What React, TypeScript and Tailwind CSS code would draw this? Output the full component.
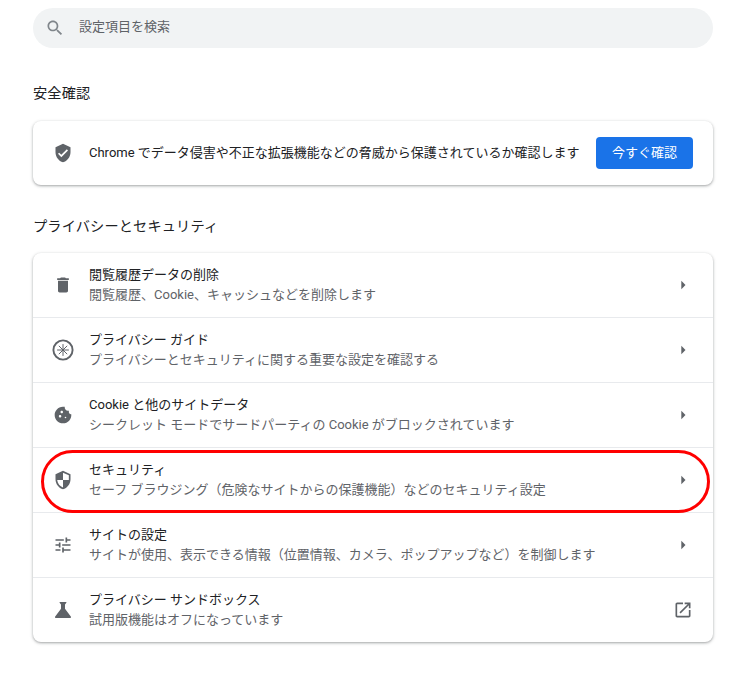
import React from 'react';

const FONT = "font-['Roboto','Noto_Sans_CJK_JP',sans-serif]";

const Icon: React.FC<{ d: string; className?: string }> = ({ d, className }) => (
  <svg viewBox="0 0 24 24" className={className ?? 'size-5 fill-[#5f6368]'}>
    <path d={d} />
  </svg>
);

const paths = {
  search:
    'M15.5 14h-.79l-.28-.27C15.41 12.59 16 11.11 16 9.5 16 5.91 13.09 3 9.5 3S3 5.91 3 9.5 5.91 16 9.5 16c1.61 0 3.09-.59 4.23-1.57l.27.28v.79l5 4.99L20.49 19l-4.99-5zm-6 0C7.01 14 5 11.99 5 9.5S7.01 5 9.5 5 14 7.01 14 9.5 11.99 14 9.5 14z',
  verified:
    'M12 1L3 5v6c0 5.55 3.84 10.74 9 12 5.16-1.26 9-6.45 9-12V5l-9-4zm-2 16l-4-4 1.41-1.41L10 14.17l6.59-6.59L18 9l-8 8z',
  trash: 'M6 19c0 1.1.9 2 2 2h8c1.1 0 2-.9 2-2V7H6v12zM19 4h-3.5l-1-1h-5l-1 1H5v2h14V4z',
  cookie:
    'M21.95 10.99c-1.79-.03-3.7-1.95-2.68-4.22-2.98 1-5.77-1.59-5.19-4.56C6.95.71 2 6.58 2 12c0 5.52 4.48 10 10 10 5.89 0 10.54-5.08 9.95-11.01zM8.5 15c-.83 0-1.5-.67-1.5-1.5S7.67 12 8.5 12s1.5.67 1.5 1.5S9.33 15 8.5 15zm2-5C9.67 10 9 9.33 9 8.5S9.67 7 10.5 7s1.5.67 1.5 1.5-.67 1.5-1.5 1.5zm4.5 6c-.55 0-1-.45-1-1s.45-1 1-1 1 .45 1 1-.45 1-1 1z',
  security:
    'M12 1L3 5v6c0 5.55 3.84 10.74 9 12 5.16-1.26 9-6.45 9-12V5l-9-4zm0 10.99h7c-.53 4.12-3.28 7.79-7 8.94V12H5V6.3l7-3.11v8.8z',
  tune: 'M3 17v2h6v-2H3zM3 5v2h10V5H3zm10 16v-2h8v-2h-8v-2h-2v6h2zM7 9v2H3v2h4v2h2V9H7zm14 4v-2H11v2h10zm-6-4h2V7h4V5h-4V3h-2v6z',
  flask:
    'M19.8 18.4L14 10.67V6.5l1.35-1.69c.26-.33.03-.81-.39-.81H9.04c-.42 0-.65.48-.39.81L10 6.5v4.17L4.2 18.4c-.49.66-.02 1.6.8 1.6h14c.82 0 1.29-.94.8-1.6z',
  external:
    'M19 19H5V5h7V3H5c-1.11 0-2 .9-2 2v14c0 1.1.89 2 2 2h14c1.1 0 2-.9 2-2v-7h-2v7zM14 3v2h3.59l-9.83 9.83 1.41 1.41L19 6.41V10h2V3h-7z',
  arrow: 'M10 7l5 5-5 5z',
};

const GuideIcon = () => (
  <svg viewBox="0 0 24 24" className="size-[24px] shrink-0">
    <circle cx="12" cy="12" r="9.6" fill="none" stroke="#5f6368" strokeWidth="1.9" />
    <path
      d="M12 6.5v11M6.5 12h11M8.1 8.1l7.8 7.8M15.9 8.1l-7.8 7.8"
      stroke="#5f6368"
      strokeWidth="1"
      strokeLinecap="round"
      fill="none"
    />
  </svg>
);

const rows = [
  { icon: <Icon d={paths.trash} />, title: '閲覧履歴データの削除', sub: '閲覧履歴、Cookie、キャッシュなどを削除します' },
  { icon: <GuideIcon />, title: 'プライバシー ガイド', sub: 'プライバシーとセキュリティに関する重要な設定を確認する' },
  { icon: <Icon d={paths.cookie} />, title: 'Cookie と他のサイトデータ', sub: 'シークレット モードでサードパーティの Cookie がブロックされています' },
  {
    icon: <Icon d={paths.security} className="size-5 -scale-x-100 fill-[#5f6368]" />,
    title: 'セキュリティ',
    sub: 'セーフ ブラウジング（危険なサイトからの保護機能）などのセキュリティ設定',
  },
  { icon: <Icon d={paths.tune} />, title: 'サイトの設定', sub: 'サイトが使用、表示できる情報（位置情報、カメラ、ポップアップなど）を制御します' },
  {
    icon: <Icon d={paths.flask} className="size-6 shrink-0 fill-[#5f6368]" />,
    title: 'プライバシー サンドボックス',
    sub: '試用版機能はオフになっています',
    external: true,
  },
];

export default function App() {
  return (
    <div className={`${FONT} relative h-[676px] w-[741px] overflow-hidden bg-white px-[33px] pt-2 text-[13px] text-[#202124]`}>
      <div className="flex h-10 w-[680px] items-center rounded-full bg-[#f1f3f4] pl-[12px] text-[#5f6368]">
        <Icon d={paths.search} className="size-[20px] fill-[#80868b]" />
        <span className="ml-[14px] -translate-y-px">設定項目を検索</span>
      </div>

      <h2 className="mt-[35px] h-[20px] text-[14.2px] leading-5 font-normal tracking-[0.15px]">安全確認</h2>
      <div className="mt-[18px] flex h-16 w-[680px] items-center rounded-lg bg-white pr-5 pl-5 shadow-[0_1px_2px_rgba(60,64,67,0.3),0_1px_3px_1px_rgba(60,64,67,0.15)]">
        <Icon d={paths.verified} />
        <span className="ml-4 flex-1">Chrome でデータ侵害や不正な拡張機能などの脅威から保護されているか確認します</span>
        <button className="h-8 w-[97px] rounded bg-[#1a73e8] text-[13px] text-white">今すぐ確認</button>
      </div>

      <h2 className="mt-[31px] h-[20px] text-[14.2px] leading-5 font-normal tracking-[0.15px]">プライバシーとセキュリティ</h2>
      <div className="mt-[17px] w-[680px] rounded-lg bg-white shadow-[0_1px_2px_rgba(60,64,67,0.3),0_1px_3px_1px_rgba(60,64,67,0.15)]">
        {rows.map((row, i) => (
          <div
            key={row.title}
            className={`flex items-center pr-5 pl-5 ${i > 0 ? 'h-[65px] border-t border-[#e8eaed]' : 'h-[64px]'}`}
          >
            <div className="flex w-5 justify-center">{row.icon}</div>
            <div className="ml-4 flex-1 leading-5">
              <div>{row.title}</div>
              <div className="text-[#5f6368]">{row.sub}</div>
            </div>
            {row.external ? (
              <Icon d={paths.external} className="size-5 fill-[#5f6368]" />
            ) : (
              <Icon d={paths.arrow} className="size-5 fill-[#5f6368]" />
            )}
          </div>
        ))}
      </div>

      {/* red hand-drawn highlight over the security row */}
      <div className="pointer-events-none absolute top-[450px] left-[41px] h-[63px] w-[669px] rounded-full border-[3px] border-[#ff0000]" />
    </div>
  );
}
